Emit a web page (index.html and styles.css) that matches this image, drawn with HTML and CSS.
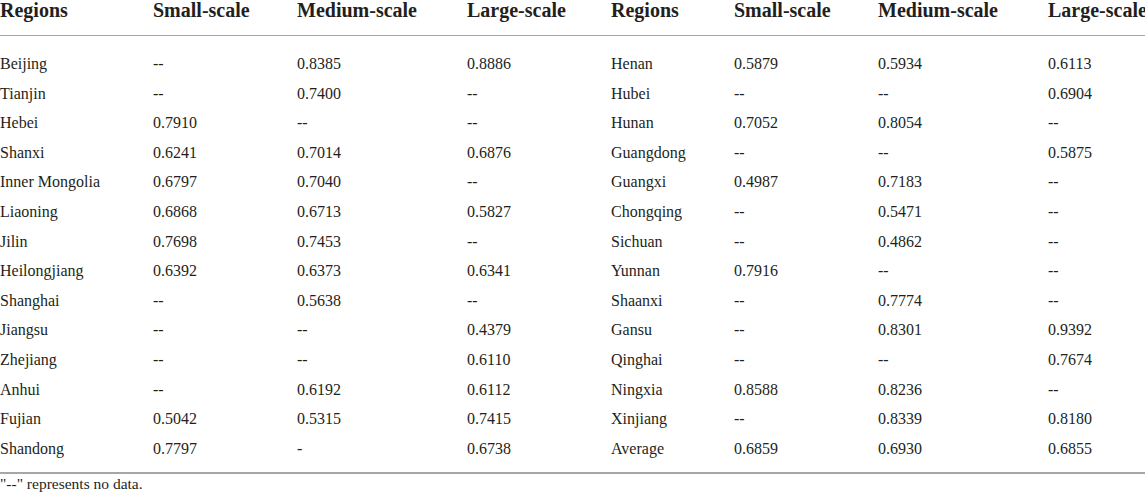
FILE: index.html
```html
<!DOCTYPE html>
<html lang="en">
  <head>
    <meta charset="UTF-8">
    <meta name="viewport" content="width=device-width, initial-scale=1.0">
    <title>Efficiency by region</title>
    <link rel="stylesheet" href="styles.css">
  </head>
  <body>
    <div class="table-wrap">
      <table class="data-table">
        <colgroup>
          <col class="c-region1">
          <col class="c-small">
          <col class="c-medium">
          <col class="c-large1">
          <col class="c-region2">
          <col class="c-small">
          <col class="c-medium">
          <col class="c-large2">
        </colgroup>
        <thead>
          <tr>
            <th>Regions</th>
            <th>Small-scale</th>
            <th>Medium-scale</th>
            <th>Large-scale</th>
            <th>Regions</th>
            <th>Small-scale</th>
            <th>Medium-scale</th>
            <th>Large-scale</th>
          </tr>
        </thead>
        <tbody>
          <tr class="first-row"><td>Beijing</td><td>--</td><td>0.8385</td><td>0.8886</td><td>Henan</td><td>0.5879</td><td>0.5934</td><td>0.6113</td></tr>
          <tr><td>Tianjin</td><td>--</td><td>0.7400</td><td>--</td><td>Hubei</td><td>--</td><td>--</td><td>0.6904</td></tr>
          <tr><td>Hebei</td><td>0.7910</td><td>--</td><td>--</td><td>Hunan</td><td>0.7052</td><td>0.8054</td><td>--</td></tr>
          <tr><td>Shanxi</td><td>0.6241</td><td>0.7014</td><td>0.6876</td><td>Guangdong</td><td>--</td><td>--</td><td>0.5875</td></tr>
          <tr><td>Inner Mongolia</td><td>0.6797</td><td>0.7040</td><td>--</td><td>Guangxi</td><td>0.4987</td><td>0.7183</td><td>--</td></tr>
          <tr><td>Liaoning</td><td>0.6868</td><td>0.6713</td><td>0.5827</td><td>Chongqing</td><td>--</td><td>0.5471</td><td>--</td></tr>
          <tr><td>Jilin</td><td>0.7698</td><td>0.7453</td><td>--</td><td>Sichuan</td><td>--</td><td>0.4862</td><td>--</td></tr>
          <tr><td>Heilongjiang</td><td>0.6392</td><td>0.6373</td><td>0.6341</td><td>Yunnan</td><td>0.7916</td><td>--</td><td>--</td></tr>
          <tr><td>Shanghai</td><td>--</td><td>0.5638</td><td>--</td><td>Shaanxi</td><td>--</td><td>0.7774</td><td>--</td></tr>
          <tr><td>Jiangsu</td><td>--</td><td>--</td><td>0.4379</td><td>Gansu</td><td>--</td><td>0.8301</td><td>0.9392</td></tr>
          <tr><td>Zhejiang</td><td>--</td><td>--</td><td>0.6110</td><td>Qinghai</td><td>--</td><td>--</td><td>0.7674</td></tr>
          <tr><td>Anhui</td><td>--</td><td>0.6192</td><td>0.6112</td><td>Ningxia</td><td>0.8588</td><td>0.8236</td><td>--</td></tr>
          <tr><td>Fujian</td><td>0.5042</td><td>0.5315</td><td>0.7415</td><td>Xinjiang</td><td>--</td><td>0.8339</td><td>0.8180</td></tr>
          <tr class="last-row"><td>Shandong</td><td>0.7797</td><td>-</td><td>0.6738</td><td>Average</td><td>0.6859</td><td>0.6930</td><td>0.6855</td></tr>
        </tbody>
      </table>
    </div>
    <p class="footnote">"--" represents no data.</p>
  </body>
</html>
```

FILE: styles.css
```css
body{
  margin: 0;
  overflow: hidden;
  background-color: #ffffff;
  color: #231f20;
  font-family: 'Liberation Serif', 'Times New Roman', serif;
}
.table-wrap{
  width: 1145px;
  overflow: hidden;
}
.data-table{
  table-layout: fixed;
  width: 1145px;
  border-collapse: collapse;
  border-bottom: 2px solid #a6a6a6;
}
.c-region1{
  width: 153px;
}
.c-small{
  width: 144px;
}
.c-medium{
  width: 170px;
}
.c-large1{
  width: 144px;
}
.c-region2{
  width: 123px;
}
.c-large2{
  width: 97px;
}
th{
  text-align: left;
  font-size: 20px;
  font-weight: bold;
  line-height: 20px;
  padding: 0 0 15px 0;
  border-bottom: 1px solid #a6a6a6;
  white-space: nowrap;
  overflow: visible;
}
td{
  font-size: 16px;
  line-height: 29.6px;
  padding: 0;
  white-space: nowrap;
  overflow: visible;
}
.first-row td{
  padding-top: 13px;
}
.last-row td{
  padding-bottom: 9px;
}
.footnote{
  margin: 1px 0 0 0;
  font-size: 15.5px;
  line-height: 18px;
}
```
